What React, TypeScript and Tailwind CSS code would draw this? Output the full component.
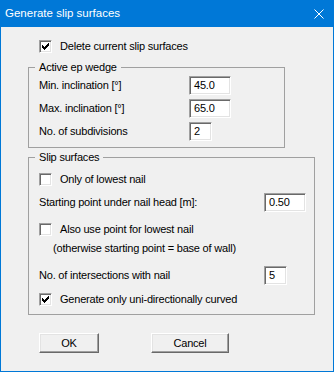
import React from "react";

const sunken =
  "border border-t-[#a0a0a0] border-l-[#a0a0a0] border-b-white border-r-white shadow-[inset_1px_1px_0_#696969,inset_-1px_-1px_0_#e3e3e3] bg-white";

const raised =
  "border border-t-white border-l-white border-b-[#696969] border-r-[#696969] shadow-[inset_-1px_-1px_0_#a0a0a0,inset_1px_1px_0_#e3e3e3] bg-[#f0f0f0]";

function CheckBox({ checked }: { checked?: boolean }) {
  return (
    <span className={`flex h-[13px] w-[13px] shrink-0 items-center justify-center ${sunken}`}>
      {checked && (
        <svg width="7" height="7" viewBox="0 0 7 7" shapeRendering="crispEdges">
          <path
            d="M0 2h1v3H0z M1 3h1v3H1z M2 4h1v3H2z M3 3h1v3H3z M4 2h1v3H4z M5 1h1v3H5z M6 0h1v3H6z"
            fill="#000"
          />
        </svg>
      )}
    </span>
  );
}

function CheckRow({ label, checked, className = "" }: { label: string; checked?: boolean; className?: string }) {
  return (
    <div className={`flex h-[13px] items-center ${className}`}>
      <CheckBox checked={checked} />
      <span className="ml-[8px] leading-[13px]">{label}</span>
    </div>
  );
}

function Field({ value, wide }: { value: string; wide?: boolean }) {
  return (
    <div className={`flex h-[19px] items-center pl-[4px] leading-[13px] ${wide ? "w-[42px]" : "w-[23px]"} ${sunken}`}>
      {value}
    </div>
  );
}

function Group({ title, width, children }: { title: string; width: string; children: React.ReactNode }) {
  return (
    <fieldset className={`m-0 border border-[#a0a0a0] p-0 ${width}`}>
      <legend className="ml-[6px] px-[4px] leading-[13px]">{title}</legend>
      {children}
    </fieldset>
  );
}

export default function App() {
  return (
    <div className="flex h-[372px] w-[334px] flex-col border border-t-0 border-[#0078d7] bg-[#f0f0f0] font-['Liberation_Sans',Arial,sans-serif] text-[11px] tracking-[-0.2px] text-black select-none">
      {/* title bar */}
      <div className="flex h-[27px] shrink-0 items-center justify-between bg-[#0078d7] pl-[4px] pr-[9px] text-white">
        <span className="text-[11.5px] tracking-normal">Generate slip surfaces</span>
        <svg width="10" height="10" viewBox="0 0 10 10">
          <path d="M0.5 0.5L9.5 9.5M9.5 0.5L0.5 9.5" stroke="#fff" strokeWidth="1" />
        </svg>
      </div>

      <div className="flex flex-col pl-[27px]">
        <CheckRow label="Delete current slip surfaces" checked className="mt-[13px] pl-[11px]" />

        <div className="mt-[8px]">
          <Group title="Active ep wedge" width="w-[257px]">
            <div className="grid grid-cols-[150px_auto] items-center gap-y-[4px] pt-[2px] pb-[6px] pl-[10px]">
              <span>Min. inclination [°]</span>
              <Field value="45.0" wide />
              <span>Max. inclination [°]</span>
              <Field value="65.0" wide />
              <span>No. of subdivisions</span>
              <Field value="2" />
            </div>
          </Group>
        </div>

        <div className="mt-[3px]">
          <Group title="Slip surfaces" width="w-[287px]">
            <div className="flex flex-col pt-[9px] pb-[8px] pl-[10px]">
              <CheckRow label="Only of lowest nail" />
              <div className="mt-[7px] grid h-[19px] grid-cols-[225px_auto] items-center">
                <span>Starting point under nail head [m]:</span>
                <Field value="0.50" wide />
              </div>
              <CheckRow label="Also use point for lowest nail" className="mt-[11px]" />
              <div className="mt-[6px] h-[13px] pl-[14px] leading-[13px]">
                (otherwise starting point = base of wall)
              </div>
              <div className="mt-[11px] grid h-[19px] grid-cols-[225px_auto] items-center">
                <span>No. of intersections with nail</span>
                <Field value="5" />
              </div>
              <CheckRow label="Generate only uni-directionally curved" checked className="mt-[8px]" />
            </div>
          </Group>
        </div>

        <div className="mt-[18px] flex pl-[11px]">
          <button className={`flex h-[20px] w-[60px] items-center justify-center ${raised}`}>OK</button>
          <button className={`ml-[52px] flex h-[20px] w-[78px] items-center justify-center ${raised}`}>Cancel</button>
        </div>
      </div>
    </div>
  );
}
